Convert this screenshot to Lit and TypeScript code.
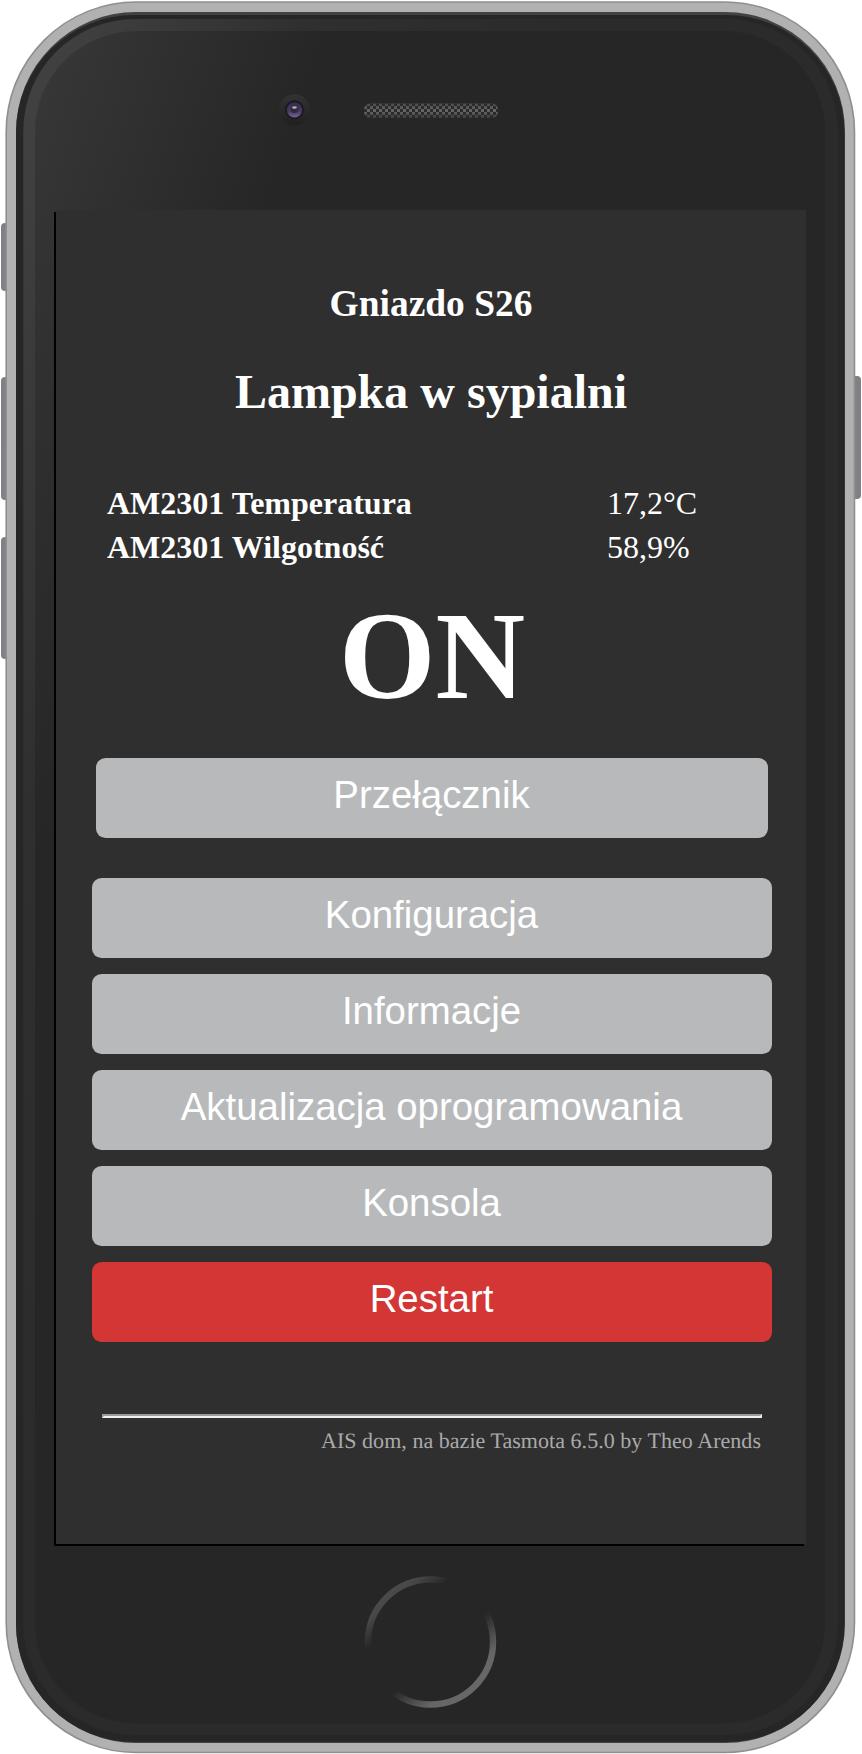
import { LitElement, html, css } from "lit";
import { customElement, property } from "lit/decorators.js";

@customElement("phone-frame")
class PhoneFrame extends LitElement {
  static styles = css`
    :host { display: block; }
    svg { display: block; }
  `;
  render() {
    return html`<svg width="862" height="1754" viewBox="0 0 862 1754" aria-hidden="true">
      <defs>
        <linearGradient id="face" gradientUnits="userSpaceOnUse" x1="40" y1="15" x2="303" y2="107">
          <stop offset="0" stop-color="#383838" /><stop offset="1" stop-color="#262626" />
        </linearGradient>
        <linearGradient id="rim" gradientUnits="userSpaceOnUse" x1="40" y1="15" x2="518" y2="183">
          <stop offset="0" stop-color="#424242" /><stop offset="0.12" stop-color="#3e3e3e" /><stop offset="0.5" stop-color="#2f2f2f" /><stop offset="1" stop-color="#2b2b2b" />
        </linearGradient>
        <linearGradient id="cam" x1="0" y1="0" x2="0" y2="1">
          <stop offset="0" stop-color="#333" /><stop offset="1" stop-color="#202020" />
        </linearGradient>
        <linearGradient id="lens" x1="0" y1="0" x2="0" y2="1">
          <stop offset="0" stop-color="#38294c" /><stop offset="0.6" stop-color="#4a3966" /><stop offset="1" stop-color="#746590" />
        </linearGradient>
        <linearGradient id="home" gradientUnits="userSpaceOnUse" x1="388.2" y1="1592.6" x2="472.8" y2="1691.4">
          <stop offset="0" stop-color="#4a4a4a" /><stop offset="0.06" stop-color="#484848" />
          <stop offset="0.23" stop-color="#262626" /><stop offset="0.61" stop-color="#262626" />
          <stop offset="0.87" stop-color="#666" /><stop offset="1" stop-color="#686868" />
        </linearGradient>
        <linearGradient id="mesh" x1="0" y1="0" x2="0" y2="1">
          <stop offset="0" stop-color="#4a4a4a" /><stop offset="0.5" stop-color="#686868" /><stop offset="1" stop-color="#3c3c3c" />
        </linearGradient>
        <pattern id="dots" width="6" height="6" patternUnits="userSpaceOnUse" x="364" y="103">
          <path d="M0 0h3v3h-3zM3 3h3v3h-3z" fill="#2b2b2b" />
        </pattern>
      </defs>
      <g fill="#808086">
        <rect x="1" y="223" width="12" height="68" rx="4" />
        <rect x="1" y="377" width="12" height="123" rx="4" />
        <rect x="1" y="537" width="12" height="122" rx="4" />
        <rect x="849" y="376" width="12" height="123" rx="4" />
      </g>
      <rect x="6.2" y="2" width="848.3" height="1750.5" rx="130" fill="#b1b1b1" stroke="#8f8f8f" stroke-width="1.6" />
      <rect x="16" y="12" width="829" height="1731" rx="120" fill="#424242" />
      <rect x="16" y="15" width="828.5" height="1727" rx="118" fill="#262626" />
      <rect x="23.3" y="19" width="814.4" height="1716" rx="112" fill="url(#rim)" />
      <rect x="35" y="31" width="790.3" height="1692.5" rx="101" fill="url(#face)" />
      <circle cx="294.5" cy="109.8" r="15.5" fill="url(#cam)" />
      <circle cx="294.5" cy="109.8" r="9.5" fill="#1b1a20" />
      <circle cx="294.5" cy="109.8" r="7.6" fill="url(#lens)" />
      <circle cx="294.5" cy="109.3" r="3.8" fill="#302b3a" />
      <ellipse cx="294.5" cy="107.5" rx="2.4" ry="1.2" fill="#b5b0c0" />
      <rect x="364" y="103.5" width="134" height="14.5" rx="6" fill="url(#mesh)" />
      <rect x="364" y="103.5" width="134" height="14.5" rx="6" fill="url(#dots)" />
      <circle cx="430.5" cy="1642" r="62.5" fill="none" stroke="url(#home)" stroke-width="6.4" />
    </svg>`;
  }
}

@customElement("menu-button")
class MenuButton extends LitElement {
  @property() label = "";
  @property({ type: Boolean }) danger = false;
  static styles = css`
    :host { display: block; }
    .btn {
      display: block; box-sizing: border-box; width: 100%; height: 80px;
      padding: 0 1px 7px 0; border: 0; border-radius: 9.6px; background: #b8b9bb; color: #fff;
      font: 38.4px/73px "Liberation Sans", Arial, sans-serif; text-align: center;
    }
    .danger { background: #d43535; }
  `;
  render() {
    return html`<button class=${this.danger ? "btn danger" : "btn"}>${this.label}</button>`;
  }
}

@customElement("app-root")
class AppRoot extends LitElement {
  static styles = css`
    :host {
      display: grid; width: 862px; height: 1754px; overflow: hidden; background: #fff;
      font-family: "Liberation Serif", "Times New Roman", serif; color: #fff;
    }
    phone-frame, .screen { grid-area: 1 / 1; }
    .screen {
      box-sizing: border-box; width: 750px; height: 1334px; margin: 210px 56px;
      padding: 72px 34px 0 36px; background: #2f2f2f; box-shadow: -2px 2px 0 #000;
    }
    h2, h3 { margin: 0 2px 0 0; text-align: center; font-weight: 700; }
    h3 { font-size: 37.44px; line-height: 44px; }
    h2 { font-size: 48px; line-height: 56px; margin-top: 38px; }
    .sensors {
      display: grid; grid-template-columns: 500px 1fr; padding-left: 15px; margin-top: 61px;
      font-size: 32px; line-height: 44px;
    }
    .name { font-weight: 700; }
    .state { height: 142px; margin-top: 17px; font-size: 124px; line-height: 142px; font-weight: 700; text-align: center; }
    .toggle { margin: 30px 4px 40px; }
    .menu { display: grid; gap: 16px; }
    hr { height: 0; margin: 72px 10px 0; border: 2px solid; border-color: #9a9a9a #eee #eee #9a9a9a; }
    .foot { margin: 10px 11px 0; font-size: 22px; line-height: 26px; text-align: right; color: #aaa; text-rendering: geometricPrecision; letter-spacing: 0.04px; }
  `;
  render() {
    return html`
      <phone-frame></phone-frame>
      <main class="screen">
        <h3>Gniazdo S26</h3>
        <h2>Lampka w sypialni</h2>
        <div class="sensors">
          <span class="name">AM2301 Temperatura</span><span>17,2°C</span>
          <span class="name">AM2301 Wilgotność</span><span>58,9%</span>
        </div>
        <div class="state">ON</div>
        <menu-button class="toggle" label="Przełącznik"></menu-button>
        <div class="menu">
          ${["Konfiguracja", "Informacje", "Aktualizacja oprogramowania", "Konsola"].map(
            (l) => html`<menu-button label=${l}></menu-button>`
          )}
          <menu-button label="Restart" danger></menu-button>
        </div>
        <hr />
        <div class="foot">AIS dom, na bazie Tasmota 6.5.0 by Theo Arends</div>
      </main>
    `;
  }
}
